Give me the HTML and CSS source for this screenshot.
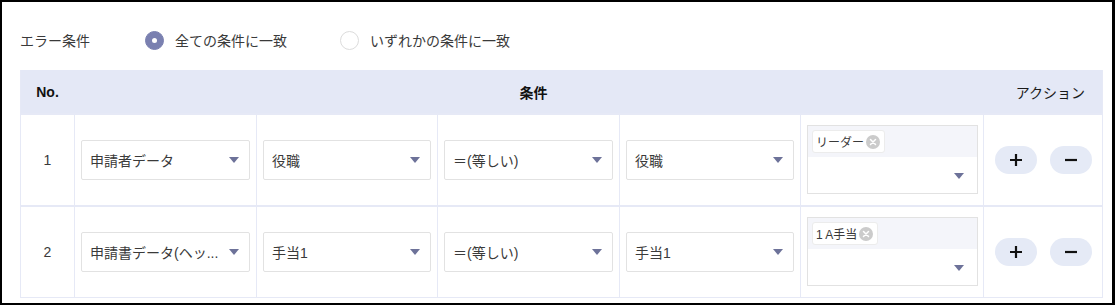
FILE: index.html
```html
<!DOCTYPE html>
<html lang="ja">
<head>
<meta charset="utf-8">
<link rel="stylesheet" href="styles.css">
</head>
<body>
<div class="wrap">
  <div class="filter">
    <span class="filter-label">エラー条件</span>
    <label class="radio"><span class="dot on"></span>全ての条件に一致</label>
    <label class="radio"><span class="dot"></span>いずれかの条件に一致</label>
  </div>

  <div class="table">
    <div class="head">
      <div class="h-no">No.</div>
      <div class="h-cond">条件</div>
      <div class="h-act">アクション</div>
    </div>

    <div class="row">
      <div class="cell num">1</div>
      <div class="cell"><div class="select"><span class="val">申請者データ</span><i class="arrow"></i></div></div>
      <div class="cell"><div class="select"><span class="val">役職</span><i class="arrow"></i></div></div>
      <div class="cell"><div class="select"><span class="val">＝(等しい)</span><i class="arrow"></i></div></div>
      <div class="cell"><div class="select"><span class="val">役職</span><i class="arrow"></i></div></div>
      <div class="cell tags-cell">
        <div class="tags">
          <div class="tags-top"><span class="chip">リーダー<i class="chip-x"><svg width="14" height="14" viewBox="0 0 14 14"><circle cx="7" cy="7" r="7" fill="#cbcbcb"/><path d="M4.5 4.5l5 5M9.5 4.5l-5 5" stroke="#fff" stroke-width="1.5" stroke-linecap="round"/></svg></i></span></div>
          <div class="tags-bottom"><i class="arrow"></i></div>
        </div>
      </div>
      <div class="cell actions">
        <button class="btn"><svg width="14" height="14" viewBox="0 0 14 14"><path d="M7 1v12M1 7h12" stroke="#111" stroke-width="2.2"/></svg></button>
        <button class="btn"><svg width="14" height="14" viewBox="0 0 14 14"><path d="M1 7h12" stroke="#111" stroke-width="2.2"/></svg></button>
      </div>
    </div>

    <div class="row">
      <div class="cell num">2</div>
      <div class="cell"><div class="select"><span class="val">申請書データ(ヘッ...</span><i class="arrow"></i></div></div>
      <div class="cell"><div class="select"><span class="val">手当1</span><i class="arrow"></i></div></div>
      <div class="cell"><div class="select"><span class="val">＝(等しい)</span><i class="arrow"></i></div></div>
      <div class="cell"><div class="select"><span class="val">手当1</span><i class="arrow"></i></div></div>
      <div class="cell tags-cell">
        <div class="tags">
          <div class="tags-top"><span class="chip">1 A手当<i class="chip-x"><svg width="14" height="14" viewBox="0 0 14 14"><circle cx="7" cy="7" r="7" fill="#cbcbcb"/><path d="M4.5 4.5l5 5M9.5 4.5l-5 5" stroke="#fff" stroke-width="1.5" stroke-linecap="round"/></svg></i></span></div>
          <div class="tags-bottom"><i class="arrow"></i></div>
        </div>
      </div>
      <div class="cell actions">
        <button class="btn"><svg width="14" height="14" viewBox="0 0 14 14"><path d="M7 1v12M1 7h12" stroke="#111" stroke-width="2.2"/></svg></button>
        <button class="btn"><svg width="14" height="14" viewBox="0 0 14 14"><path d="M1 7h12" stroke="#111" stroke-width="2.2"/></svg></button>
      </div>
    </div>
  </div>
</div>
</body>
</html>
```

FILE: styles.css
```css
html, body {
  margin: 0;
  padding: 0;
}
body {
  width: 1115px;
  height: 305px;
  box-sizing: border-box;
  border: 2px solid #000;
  border-right-width: 3px;
  background: #fff;
  overflow: hidden;
  font-family: "Liberation Sans", "Noto Sans CJK JP", sans-serif;
  color: #333;
  font-size: 14px;
}
.wrap {
  padding: 24px 0 0 18px;
}
.filter {
  display: flex;
  align-items: center;
  height: 28px;
}
.filter-label {
  width: 125px;
  color: #3a3a3a;
}
.radio {
  display: flex;
  align-items: center;
  gap: 11px;
  margin-right: 53px;
  color: #3a3a3a;
}
.dot {
  width: 19px;
  height: 19px;
  border-radius: 50%;
  border: 1px solid #dcdcdc;
  box-sizing: border-box;
  background: #fff;
  position: relative;
}
.dot.on {
  background: #7a80b0;
  border-color: #7a80b0;
}
.dot.on::after {
  content: "";
  position: absolute;
  left: 6px;
  top: 6px;
  width: 5px;
  height: 5px;
  border-radius: 50%;
  background: #fff;
}
.table {
  margin-top: 16px;
  width: 1083px;
  border: 1px solid #e6e9f6;
  border-top: none;
  box-sizing: border-box;
}
.head,
.row {
  display: grid;
  grid-template-columns: 53px 182px 181px 182px 181px 183px 120px;
}
.head {
  background: #e4e8f6;
  height: 43px;
  align-items: center;
  font-weight: bold;
  color: #111;
}
.h-no {
  text-align: center;
}
.h-cond {
  grid-column: 2 / 7;
  text-align: center;
  padding-left: 10px;
}
.h-act {
  text-align: right;
  padding-right: 18px;
  font-weight: normal;
  color: #1a1a1a;
}
.row {
  border-top: 2px solid #e6e9f6;
}
.cell {
  border-left: 1px solid #e6e9f6;
  display: flex;
  align-items: center;
  padding: 0 6px;
  min-width: 0;
}
.cell.num {
  border-left: none;
  justify-content: center;
  color: #3a3a3a;
}
.select {
  flex: 1;
  min-width: 0;
  height: 40px;
  box-sizing: border-box;
  border: 1px solid #e2e2e2;
  border-radius: 2px;
  display: flex;
  align-items: center;
  justify-content: space-between;
  padding: 0 10px 0 8px;
  color: #3a3a3a;
}
.val {
  white-space: nowrap;
  overflow: hidden;
}
.arrow {
  flex: none;
  width: 0;
  height: 0;
  border-left: 5.5px solid transparent;
  border-right: 5.5px solid transparent;
  border-top: 6px solid #6d7299;
  margin-left: 4px;
}
.tags-cell {
  padding: 10px 5px 11px 6px;
}
.tags {
  flex: 1;
  height: 69px;
  box-sizing: border-box;
  border: 1px solid #e2e2e2;
  display: flex;
  flex-direction: column;
}
.tags-top {
  height: 31px;
  background: #f4f5fa;
  padding: 4px 0 0 4px;
  box-sizing: border-box;
}
.chip {
  display: inline-flex;
  align-items: center;
  height: 23px;
  box-sizing: border-box;
  padding: 0 4px 0 3px;
  background: #fff;
  border: 1px solid #ececec;
  border-radius: 3px;
  font-size: 12px;
  color: #3a3a3a;
}
.chip-x {
  display: flex;
  margin-left: 2px;
}
.tags-bottom {
  flex: 1;
  display: flex;
  align-items: center;
  justify-content: flex-end;
  padding: 2px 13px 0 0;
}
.actions {
  justify-content: center;
  gap: 13px;
  padding: 0;
}
.btn {
  width: 42px;
  height: 28px;
  border: none;
  border-radius: 14px;
  background: #e5eaf6;
  display: flex;
  align-items: center;
  justify-content: center;
  padding: 0;
}
```
